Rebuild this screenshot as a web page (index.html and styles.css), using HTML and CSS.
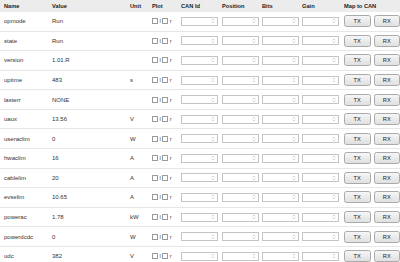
FILE: index.html
```html
<!DOCTYPE html>
<html lang="en">
<head>
    <meta charset="UTF-8">
    <title>Spot values</title>
    <link rel="stylesheet" href="styles.css">
</head>
<body>
    <table class="params">
        <colgroup>
            <col class="c-name"><col class="c-value"><col class="c-unit"><col class="c-plot">
            <col class="c-can"><col class="c-pos"><col class="c-bits"><col class="c-gain"><col class="c-map">
        </colgroup>
        <thead>
            <tr>
                <th>Name</th><th>Value</th><th>Unit</th><th>Plot</th><th>CAN Id</th>
                <th>Position</th><th>Bits</th><th>Gain</th><th>Map to CAN</th>
            </tr>
        </thead>
        <tbody id="rows"></tbody>
    </table>
    <script>
        const values = [
            ['opmode', 'Run', ''],
            ['state', 'Run', ''],
            ['version', '1.01.R', ''],
            ['uptime', '483', 's'],
            ['lasterr', 'NONE', ''],
            ['uaux', '13.56', 'V'],
            ['useraclim', '0', 'W'],
            ['hwaclim', '16', 'A'],
            ['cablelim', '20', 'A'],
            ['evselim', '10.65', 'A'],
            ['powerac', '1.78', 'kW'],
            ['powerdcdc', '0', 'W'],
            ['udc', '382', 'V']
        ];
        const spin = '<span class="num"><svg width="4" height="6" viewBox="0 0 4 6"><path d="M0.8 2.4 L2 1 L3.2 2.4 M0.8 3.6 L2 5 L3.2 3.6" fill="none" stroke="#b8b8b8" stroke-width="0.6"/></svg></span>';
        const rows = document.getElementById('rows');
        values.forEach(v => {
            rows.innerHTML += `<tr>
                <td>${v[0]}</td><td>${v[1]}</td><td>${v[2]}</td>
                <td><span class="plot"><span class="box"></span>l<span class="box"></span>r</span></td>
                <td>${spin}</td><td>${spin}</td><td>${spin}</td><td>${spin}</td>
                <td><span class="map"><button class="btn">TX</button><button class="btn">RX</button></span></td>
            </tr>`;
        });
    </script>
</body>
</html>
```
FILE: styles.css
```css
body {
    margin: 0;
    font-family: 'Liberation Sans', Arial, sans-serif;
    font-size: 6px;
    color: #333;
    background: white;
}

.params {
    border-collapse: collapse;
    table-layout: fixed;
    width: 400px;
}

.c-name { width: 48px; }
.c-value { width: 78px; }
.c-unit { width: 22px; }
.c-plot { width: 29px; }
.c-can { width: 41px; }
.c-pos { width: 40px; }
.c-bits { width: 40px; }
.c-gain { width: 42px; }
.c-map { width: 60px; }

th {
    background: #ececec;
    font-weight: bold;
    font-size: 5.7px;
    text-align: left;
    height: 12px;
    padding: 0 0 0 4px;
    color: #222;
}

td {
    height: 18.58px;
    padding: 0 0 0 4px;
    border-bottom: 1px solid #e6e6e6;
    white-space: nowrap;
}

.plot {
    display: flex;
    align-items: center;
    gap: 1.5px;
    color: #555;
}

.box {
    width: 4px;
    height: 4px;
    border: 0.6px solid #999;
    border-radius: 0.5px;
}

.num {
    display: flex;
    align-items: center;
    justify-content: flex-end;
    width: 37px;
    height: 9px;
    box-sizing: border-box;
    border: 0.7px solid #c4c4c4;
    padding-right: 2px;
    background: white;
}

.map {
    display: flex;
    gap: 3px;
}

.btn {
    width: 27px;
    height: 12px;
    padding: 0;
    font-family: inherit;
    font-size: 5.7px;
    color: #222;
    border: 0.7px solid #aaa;
    border-radius: 2.5px;
    background: linear-gradient(#f6f6f6, #e0e0e0);
}
```
